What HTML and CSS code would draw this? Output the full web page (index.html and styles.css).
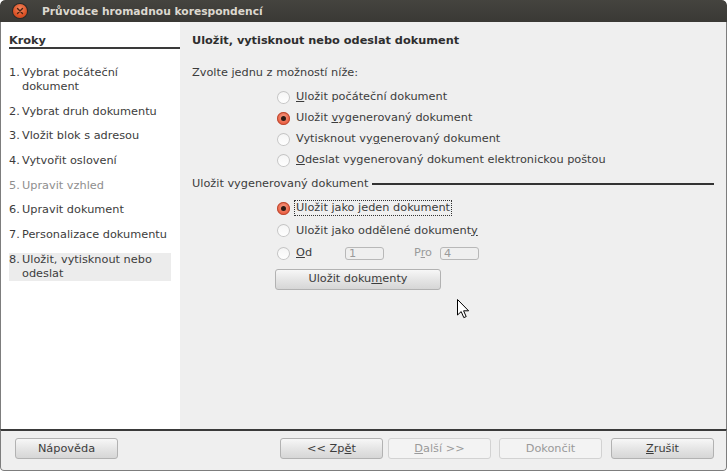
FILE: index.html
```html
<!DOCTYPE html>
<html lang="cs">
<head>
<meta charset="utf-8">
<title>Průvodce hromadnou korespondencí</title>
<link rel="stylesheet" href="styles.css">
</head>
<body>
<div class="window">
  <div class="titlebar">
    <span class="close"><svg width="8" height="8" viewBox="0 0 8 8"><path d="M1.5 1.5 L6.5 6.5 M6.5 1.5 L1.5 6.5" stroke="#4a2414" stroke-width="1.4" stroke-linecap="round"/></svg></span>
    <span class="title">Průvodce hromadnou korespondencí</span>
  </div>
  <div class="main">
    <div class="steps">
      <div class="steps-head">Kroky</div>
      <ol class="step-list">
        <li class="step"><span class="num">1.</span><span>Vybrat počáteční dokument</span></li>
        <li class="step"><span class="num">2.</span><span>Vybrat druh dokumentu</span></li>
        <li class="step"><span class="num">3.</span><span>Vložit blok s adresou</span></li>
        <li class="step"><span class="num">4.</span><span>Vytvořit oslovení</span></li>
        <li class="step disabled"><span class="num">5.</span><span>Upravit vzhled</span></li>
        <li class="step"><span class="num">6.</span><span>Upravit dokument</span></li>
        <li class="step"><span class="num">7.</span><span>Personalizace dokumentu</span></li>
        <li class="step current"><span class="num">8.</span><span>Uložit, vytisknout nebo odeslat</span></li>
      </ol>
    </div>
    <div class="content">
      <div class="heading">Uložit, vytisknout nebo odeslat dokument</div>
      <div class="prompt">Zvolte jednu z možností níže:</div>
      <div class="options">
        <div class="opt"><span class="radio"></span><span><u>U</u>ložit počáteční dokument</span></div>
        <div class="opt"><span class="radio on"></span><span>Uložit <u>v</u>ygenerovaný dokument</span></div>
        <div class="opt"><span class="radio"></span><span>Vytisknout vy<u>g</u>enerovaný dokument</span></div>
        <div class="opt"><span class="radio"></span><span><u>O</u>deslat vygenerovaný dokument elektronickou poštou</span></div>
      </div>
      <div class="section">
        <span>Uložit vygenerovaný dokument</span>
        <span class="rule"></span>
      </div>
      <div class="options sub">
        <div class="opt"><span class="radio on"></span><span class="focus">Uložit jako jeden dokument</span></div>
        <div class="opt"><span class="radio"></span><span>Uložit jako oddělené dokument<u>y</u></span></div>
        <div class="opt"><span class="radio"></span><span class="od"><u>O</u>d</span><span class="field">1</span><span class="pro">P<u>r</u>o</span><span class="field">4</span></div>
        <div class="btn-row"><button class="btn save">Uložit doku<u>m</u>enty</button></div>
      </div>
    </div>
  </div>
  <div class="footer">
    <button class="btn">Nápověda</button>
    <div class="spacer"></div>
    <button class="btn">&lt;&lt; Zp<u>ě</u>t</button>
    <button class="btn off next"><u>D</u>alší &gt;&gt;</button>
    <button class="btn off finish">Dokončit</button>
    <button class="btn cancel"><u>Z</u>rušit</button>
  </div>
  <svg class="cursor" width="13" height="20" viewBox="0 0 13 20"><path d="M0.5 0.5 L0.5 16 L4.2 12.6 L6.8 18.6 L9.2 17.6 L6.6 11.8 L11.6 11.8 Z" fill="#fff" stroke="#000" stroke-width="1" stroke-linejoin="round"/></svg>
</div>
</body>
</html>
```

FILE: styles.css
```css
* { box-sizing: border-box; }
html, body { margin: 0; padding: 0; background: #ffffff; }
body {
  font-family: "DejaVu Sans", "Liberation Sans", sans-serif;
  font-size: 11.3px;
  color: #3c3c3c;
}
u { text-decoration: underline; text-underline-offset: 1px; }

.window {
  position: relative;
  width: 727px;
  height: 471px;
  display: flex;
  flex-direction: column;
  background: #efefef;
  border-radius: 5px 5px 4px 4px;
  overflow: hidden;
}

.titlebar {
  height: 22px;
  flex: none;
  display: flex;
  align-items: center;
  background: linear-gradient(#45443f, #3a3935);
  border-radius: 5px 5px 0 0;
  padding-left: 13px;
}
.close {
  width: 14px;
  height: 14px;
  border-radius: 50%;
  background: radial-gradient(circle at 50% 35%, #f28a62, #dc5226 60%, #c0441c);
  box-shadow: 0 0 0 1px #2a2926;
  display: flex;
  align-items: center;
  justify-content: center;
}
.title {
  margin-left: 15px;
  font-weight: bold;
  font-size: 10.7px;
  color: #dcd8cf;
}

.main {
  flex: 1;
  display: flex;
  border-left: 1px solid #7d7d7d;
  border-right: 1px solid #7d7d7d;
}

.steps {
  width: 179px;
  flex: none;
  background: #ffffff;
  padding: 12px 0 0 8px;
}
.steps-head {
  font-weight: bold;
  line-height: 14px;
  color: #333;
  border-bottom: 2px solid #3a3a3a;
  padding-bottom: 0;
  height: 15px;
}
.step-list {
  list-style: none;
  margin: 17px 9px 0 0;
  padding: 0;
  display: flex;
  flex-direction: column;
  gap: 10.7px;
}
.step {
  display: grid;
  grid-template-columns: 13px 1fr;
  line-height: 14px;
}
.step.disabled { color: #8e8e8e; }
.step.current { background: #ececec; }

.content {
  flex: 1;
  padding: 12px 12px 0 12px;
}
.heading {
  font-weight: bold;
  line-height: 14px;
  color: #2e2e2e;
}
.prompt {
  margin-top: 18px;
  line-height: 14px;
}
.options {
  margin-top: 10px;
  padding-left: 85px;
  display: flex;
  flex-direction: column;
  gap: 7px;
}
.opt {
  display: flex;
  align-items: center;
  line-height: 14px;
  height: 14px;
}
.radio {
  width: 13px;
  height: 13px;
  border-radius: 50%;
  flex: none;
  margin-right: 6px;
  background: linear-gradient(#f4f4f4, #ffffff);
  box-shadow: inset 0 0 0 1px #c4c4c4;
  position: relative;
}
.radio.on {
  background: radial-gradient(circle at 50% 40%, #f7a089, #e8583a 70%, #d24828);
  box-shadow: inset 0 0 0 1px #b94a33;
}
.radio.on::after {
  content: "";
  position: absolute;
  left: 4px;
  top: 4px;
  width: 5px;
  height: 5px;
  border-radius: 50%;
  background: #2c1a14;
}

.section {
  margin-top: 10px;
  display: flex;
  align-items: center;
  line-height: 14px;
}
.section .rule {
  flex: 1;
  height: 2px;
  background: #333;
  margin-left: 4px;
}

.options.sub {
  gap: 8.5px;
}
.focus {
  outline: 1px dotted #333;
  outline-offset: 0;
  padding: 0 1px;
  margin-left: -1px;
}
.od { width: 49px; }
.field {
  width: 39px;
  height: 13px;
  border: 1px solid #b8b8b8;
  border-radius: 3px;
  color: #9a9a9a;
  line-height: 11px;
  padding-left: 3px;
  font-size: 11.3px;
  background: #efefef;
}
.pro {
  margin-left: 30px;
  width: 26px;
  color: #9a9a9a;
}
.btn-row { margin-left: -2px; }

.btn {
  font-family: inherit;
  font-size: 11.3px;
  color: #3c3c3c;
  height: 21px;
  width: 103px;
  border: 1px solid #b2b2b2;
  border-radius: 3px;
  background: linear-gradient(#f7f7f7, #e2e2e2 60%, #d6d6d6);
  padding: 0;
  line-height: 18px;
}
.btn.save { width: 166px; }
.btn.off {
  background: #f3f3f3;
  border-color: #d2d2d2;
  color: #9a9a9a;
}

.footer {
  flex: none;
  height: 42px;
  border-top: 2px solid #3a3a3a;
  border-left: 1px solid #7d7d7d;
  border-right: 1px solid #7d7d7d;
  border-bottom: 1px solid #7d7d7d;
  border-radius: 0 0 4px 4px;
  display: flex;
  align-items: flex-start;
  padding: 7px 12px 0 14px;
}
.spacer { flex: 1; }
.next { margin-left: 5px; }
.finish { margin-left: 8px; }
.cancel { margin-left: 9px; }

.cursor {
  position: absolute;
  left: 457px;
  top: 299px;
}
```
